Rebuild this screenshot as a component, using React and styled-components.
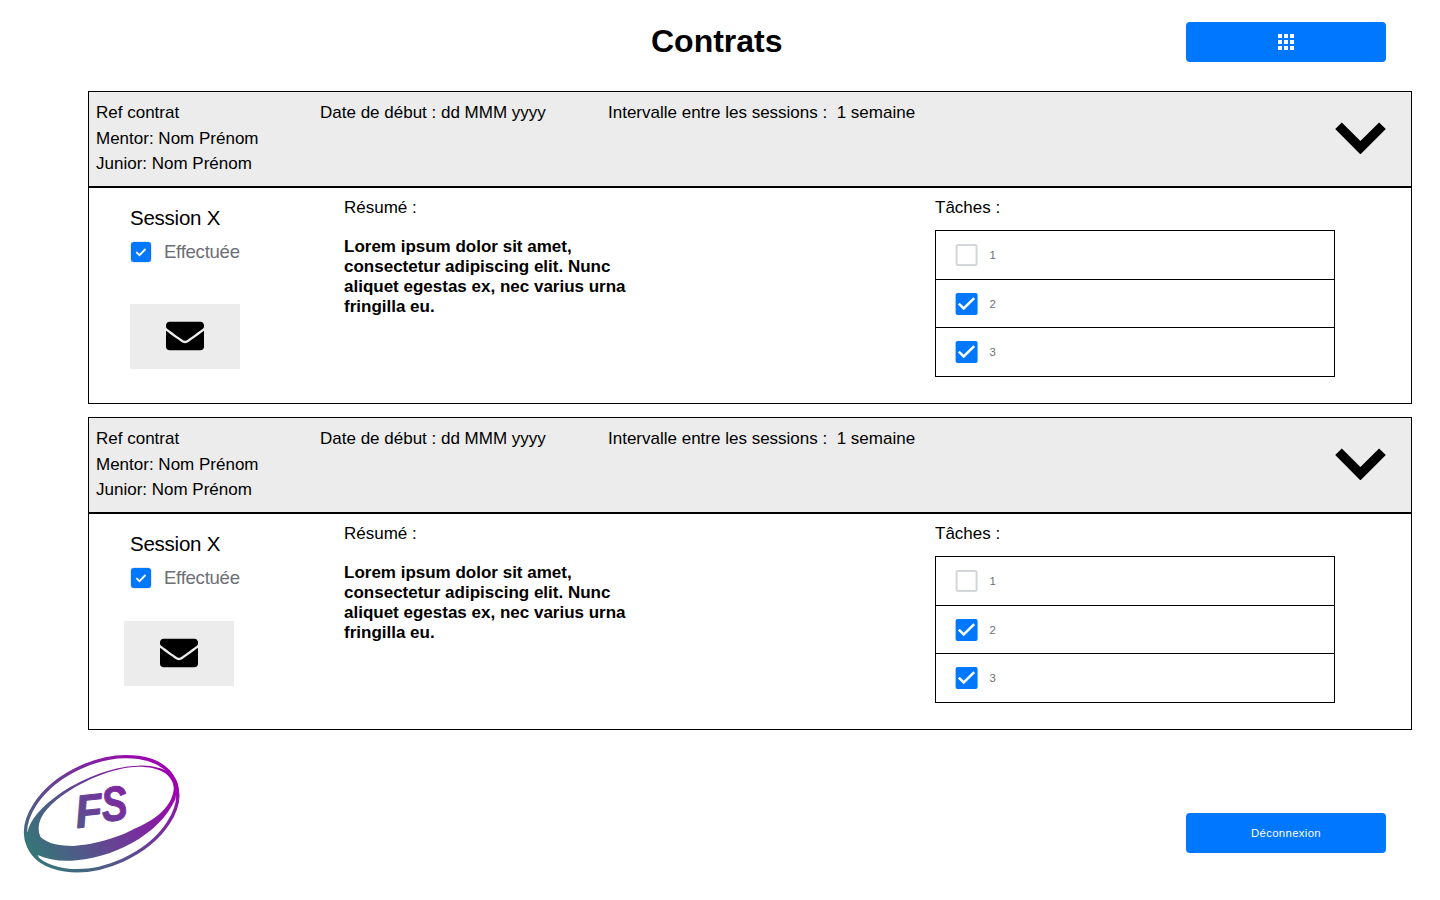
import React from "react";
import styled, { createGlobalStyle } from "styled-components";
import { FaEnvelope } from "react-icons/fa";

const GlobalStyle = createGlobalStyle`
  *, *::before, *::after { box-sizing: border-box; }
  body {
    margin: 0;
    background: #fff;
    color: #000;
    font-family: "Liberation Sans", Arial, sans-serif;
    font-size: 17px;
  }
`;

const Page = styled.div`
  display: flex;
  flex-direction: column;
  height: 900px;
  overflow: hidden;
`;

const TopBar = styled.header`
  display: flex;
  justify-content: space-between;
  align-items: flex-start;
  height: 91px;
  padding: 22px 54px 0 651px;
`;

const Title = styled.h1`
  margin: 0;
  font-size: 32px;
  line-height: 38px;
`;

const Button = styled.button`
  display: flex;
  align-items: center;
  justify-content: center;
  width: 200px;
  height: 40px;
  padding: 0;
  border: 0;
  border-radius: 4px;
  background: #0077ff;
  color: #fff;
  font-family: inherit;
  font-size: 11.4px;
  letter-spacing: 0.32px;
`;

const ContractList = styled.main`
  display: flex;
  flex-direction: column;
  gap: 13px;
  padding: 0 28px 0 88px;
`;

const ContractHeader = styled.div`
  display: grid;
  grid-template-columns: 224px 288px 1fr auto;
  height: 96px;
  padding: 8px 25px 0 7px;
  border: 1px solid #000;
  background: #ececec;
  line-height: 25.5px;
  white-space: pre;
`;

const ChevronIcon = styled.svg`
  width: 51px;
  height: 32px;
  margin-top: 22px;
`;

const ContractBody = styled.div`
  display: grid;
  grid-template-columns: 214px 591px 400px;
  align-items: start;
  height: 217px;
  padding: 10px 0 0 41px;
  border: 1px solid #000;
  line-height: 20px;
`;

const SessionColumn = styled.div`
  padding-top: 8px;
`;

const SessionName = styled.div`
  font-size: 20.5px;
  letter-spacing: -0.25px;
  line-height: 24px;
`;

const DoneLabel = styled.div`
  display: flex;
  align-items: center;
  gap: 12px;
  height: 22px;
  margin-top: 11px;
  font-size: 18.6px;
  letter-spacing: -0.28px;
  color: #6c6f75;
`;

const MailButton = styled.button`
  display: flex;
  align-items: center;
  justify-content: center;
  width: 110px;
  height: 65px;
  margin: ${({ $raised }) => ($raised ? "32px 0 0 -6px" : "41px 0 0")};
  padding: 0 0 2px;
  border: 0;
  background: #ececec;
  color: #000;
  font-size: 38px;
`;

const Summary = styled.p`
  width: 300px;
  margin: 19px 0 0;
  font-weight: bold;
`;

const TaskList = styled.div`
  display: grid;
  grid-template-rows: 49px 48px 49px;
  height: 147px;
  margin-top: 12px;
  border: solid #000;
  border-width: 0 1px 1px;
`;

const TaskRow = styled.div`
  display: flex;
  align-items: center;
  gap: 11.5px;
  padding-left: 19px;
  border-top: 1px solid #000;
  font-size: 11.4px;
  color: #6c6f75;
`;

const BoxIcon = styled.svg`
  width: 22px;
  height: 22px;
  flex: none;
`;

const TaskBoxIcon = styled(BoxIcon)`
  width: 23px;
`;

const Footer = styled.footer`
  display: flex;
  justify-content: space-between;
  align-items: flex-start;
  padding: 10px 54px 0 10px;
`;

const Logo = styled.svg`
  width: 190px;
  height: 150px;
`;

const LogoutButton = styled(Button)`
  margin-top: 73px;
`;

function TaskCheck({ checked }) {
  return (
    <TaskBoxIcon viewBox="-0.6 0 23 22">
      {checked ? (
        <>
          <rect width="22" height="22" rx="2" fill="#0077ff" />
          <path d="M3.2 10.6 8.1 15.4 18.6 5.1" fill="none" stroke="#fff" strokeWidth="2.5" />
        </>
      ) : (
        <rect x="1" y="1" width="20" height="20" rx="1.5" fill="#fff" stroke="#d3d6da" strokeWidth="2" />
      )}
    </TaskBoxIcon>
  );
}

function DoneCheck() {
  return (
    <BoxIcon viewBox="0 0 22 22">
      <rect x="0.5" y="0.5" width="21" height="21" rx="3.5" fill="#c9d3df" />
      <rect x="1" y="1" width="20" height="20" rx="3" fill="#0077ff" />
      <path d="M6.3 11.2 9.5 14.2 15.5 8" fill="none" stroke="#fff" strokeWidth="1.8" />
    </BoxIcon>
  );
}

function GridIcon() {
  const cells = [0, 6, 12];
  return (
    <svg width="16" height="16" viewBox="0 0 16 16" fill="#fff">
      {cells.map((y) => cells.map((x) => <rect key={`${x}-${y}`} x={x} y={y} width="4" height="4" />))}
    </svg>
  );
}

function Contract({ mailRaised }) {
  return (
    <section>
      <ContractHeader>
        <div>
          <div>Ref contrat</div>
          <div>Mentor: Nom Prénom</div>
          <div>Junior: Nom Prénom</div>
        </div>
        <div>Date de début : dd MMM yyyy</div>
        <div>{"Intervalle entre les sessions :  1 semaine"}</div>
        <ChevronIcon viewBox="0 0 51 32">
          <path d="M0.2 7 6.8 0.5 25.4 19 44.1 0.5 50.8 7 25.4 32.4Z" />
        </ChevronIcon>
      </ContractHeader>
      <ContractBody>
        <SessionColumn>
          <SessionName>Session X</SessionName>
          <DoneLabel>
            <DoneCheck />
            Effectuée
          </DoneLabel>
          <MailButton $raised={mailRaised}>
            <FaEnvelope />
          </MailButton>
        </SessionColumn>
        <div>
          <div>Résumé :</div>
          <Summary>
            Lorem ipsum dolor sit amet, consectetur adipiscing elit. Nunc aliquet egestas ex, nec varius urna fringilla eu.
          </Summary>
        </div>
        <div>
          <div>Tâches :</div>
          <TaskList>
            {[1, 2, 3].map((n) => (
              <TaskRow key={n}>
                <TaskCheck checked={n > 1} />
                {n}
              </TaskRow>
            ))}
          </TaskList>
        </div>
      </ContractBody>
    </section>
  );
}

function BrandLogo() {
  return (
    <Logo viewBox="0 0 570 450">
      <defs>
        <linearGradient id="brand" gradientUnits="userSpaceOnUse" x1="70" y1="350" x2="480" y2="100">
          <stop offset="0" stopColor="#347777" />
          <stop offset="0.5" stopColor="#693f96" />
          <stop offset="1" stopColor="#a000b0" />
        </linearGradient>
      </defs>
      <ellipse cx="275" cy="221" rx="240.5" ry="153" transform="rotate(-24.3 275 221)" fill="none" stroke="url(#brand)" strokeWidth="10" />
      <path
        fill="url(#brand)"
        fillRule="evenodd"
        d="M488 118C470 85 430 75 385 77C300 79 205 122 148 162C92 202 60 240 53 275L43 272C44 305 57 335 88 354L83 345C112 358 145 364 185 362C300 357 445 290 496 178L500 150ZM491 150C496 105 450 80 385 80C310 81 215 124 158 166C105 205 80 240 87 278L92 292C120 314 150 318 190 318C260 314 335 288 370 268C445 235 483 200 491 150Z"
      />
      <path fill="url(#brand)" d="M425 62C460 72 490 98 503 130L506 155L498 178L490 132C479 104 455 90 434 82C462 87 473 94 480 97C467 81 445 71 425 62Z" />
      <g
        fill="url(#brand)"
        stroke="url(#brand)"
        strokeWidth="3"
        strokeLinejoin="round"
        fontFamily="Liberation Sans, Arial, sans-serif"
        fontWeight="bold"
        fontStyle="italic"
      >
        <text x="200" y="264" fontSize="138" textLength="82" lengthAdjust="spacingAndGlyphs" transform="rotate(-6 200 264)">F</text>
        <text x="279" y="245" fontSize="146" textLength="78" lengthAdjust="spacingAndGlyphs" transform="rotate(-6 279 245)">S</text>
      </g>
    </Logo>
  );
}

export default function App() {
  return (
    <Page>
      <GlobalStyle />
      <TopBar>
        <Title>Contrats</Title>
        <Button aria-label="Menu">
          <GridIcon />
        </Button>
      </TopBar>
      <ContractList>
        <Contract />
        <Contract mailRaised />
      </ContractList>
      <Footer>
        <BrandLogo />
        <LogoutButton>Déconnexion</LogoutButton>
      </Footer>
    </Page>
  );
}
